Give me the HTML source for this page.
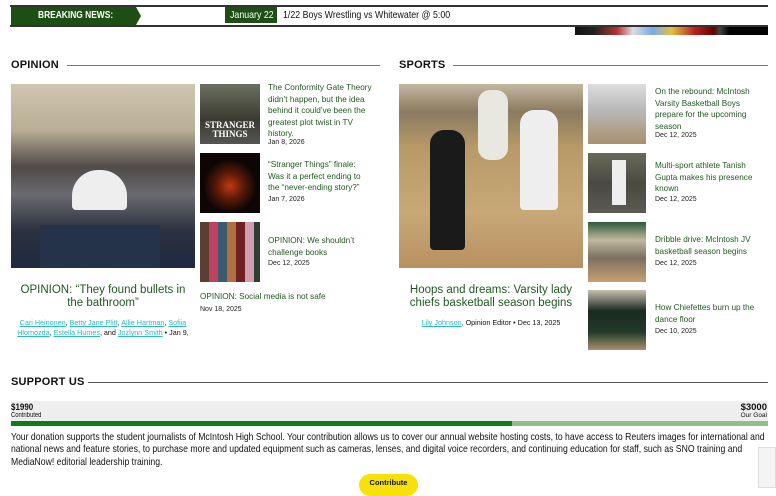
<!DOCTYPE html>
<html><head><meta charset="utf-8"><style>
*{margin:0;padding:0;box-sizing:border-box}
body{width:776px;height:488px;overflow:hidden;background:#fff;font-family:"Liberation Sans",sans-serif;position:relative;color:#111}
.a{position:absolute}
.h{font-weight:bold;font-size:11px;letter-spacing:.2px;color:#111}
.t{font-size:8.2px;line-height:11.6px;color:#1f5a1f}
.d{font-size:7px;color:#222}
.line{height:1px;background:#777}
.n{transform-origin:0 0;transform:scaleX(.84)}
a{color:#28b8c8;text-decoration:underline}
</style></head><body>
<div class="a" style="left:10px;top:5px;width:758px;height:2px;background:#333"></div>
<div class="a" style="left:10px;top:25px;width:758px;height:2px;background:#333"></div>
<div class="a" style="left:11px;top:7px;width:125px;height:18px;background:#1d4f14"></div>
<div class="a" style="left:136px;top:7px;width:0;height:0;border-top:9px solid transparent;border-bottom:9px solid transparent;border-left:5px solid #1d4f14"></div>
<div class="a n" style="left:38px;top:10px;font-size:10px;color:#fff;font-weight:bold">BREAKING NEWS:</div>
<div class="a" style="left:225px;top:7px;width:52px;height:16px;background:#1d4f14"></div>
<div class="a n" style="left:230px;top:9px;font-size:10.5px;color:#fff">January 22</div>
<div class="a n" style="left:283px;top:9px;font-size:10.5px;color:#111">1/22 Boys Wrestling vs Whitewater @ 5:00</div>
<div class="a" style="left:575px;top:27px;width:193px;height:8px;background:linear-gradient(90deg,#111 0%,#222 10%,#b33 22%,#ddd 30%,#7ae 40%,#e4c040 50%,#b22 62%,#600 72%,#444 75%,#000 80%)"></div>

<div class="a h" style="left:11px;top:59px">OPINION</div>
<div class="a line" style="left:67px;top:65px;width:313px"></div>
<div class="a h" style="left:399px;top:59px">SPORTS</div>
<div class="a line" style="left:453px;top:65px;width:315px"></div>

<div class="a" style="left:11px;top:84px;width:184px;height:184px;background:linear-gradient(180deg,#cfc6b0 0%,#b9ae95 25%,#504a48 45%,#6a6a70 60%,#2c3140 80%,#1e2a40 100%)"></div>
<div class="a" style="left:72px;top:170px;width:55px;height:40px;border-radius:26px 26px 4px 4px;background:#eee"></div>
<div class="a" style="left:40px;top:225px;width:120px;height:43px;background:#24324a"></div>
<div class="a" style="left:11px;top:284px;width:184px;text-align:center;font-size:11.5px;line-height:13px;color:#1f5a1f">OPINION: “They found bullets in the bathroom”</div>
<div class="a" style="left:11px;top:318px;width:184px;text-align:center;font-size:7.2px;line-height:10px"><a>Cari Heinonen</a>, <a>Betty Jane Plitt</a>, <a>Allie Hartman</a>, <a>Sofiia Hlomozda</a>, <a>Estella Humes</a>, and <a>Jozlynn Smith</a> • Jan 9,</div>

<div class="a" style="left:200px;top:84px;width:60px;height:60px;background:linear-gradient(180deg,#6a7060,#3c3a30 60%,#555 100%)"></div>
<div class="a" style="left:203px;top:121px;font-size:9px;font-weight:bold;color:#fff;font-family:'Liberation Serif',serif;line-height:9px;text-align:center;width:54px">STRANGER THINGS</div>
<div class="a" style="left:200px;top:153px;width:60px;height:60px;background:radial-gradient(circle at 50% 55%,#c03a10 0%,#5a1a08 30%,#0d0605 60%)"></div>
<div class="a" style="left:200px;top:222px;width:60px;height:60px;background:repeating-linear-gradient(90deg,#5a4030 0 9px,#c04060 9px 18px,#3a5a70 18px 27px,#b07040 27px 36px,#702020 36px 45px,#d0a0b0 45px 54px,#304030 54px 60px)"></div>
<div class="a t" style="left:268px;top:82px;width:106px">The Conformity Gate Theory didn’t happen, but the idea behind it could’ve been the greatest plot twist in TV history.</div>
<div class="a d" style="left:268px;top:139px">Jan 8, 2026</div>
<div class="a t" style="left:268px;top:159px;width:106px">“Stranger Things” finale: Was it a perfect ending to the “never-ending story?”</div>
<div class="a d" style="left:268px;top:196px">Jan 7, 2026</div>
<div class="a t" style="left:268px;top:235px;width:106px">OPINION: We shouldn’t challenge books</div>
<div class="a d" style="left:268px;top:260px">Dec 12, 2025</div>
<div class="a t" style="left:200px;top:291px">OPINION: Social media is not safe</div>
<div class="a d" style="left:200px;top:306px">Nov 18, 2025</div>

<div class="a" style="left:399px;top:84px;width:184px;height:184px;background:linear-gradient(180deg,#c4b8a0 0%,#8a7a60 15%,#b89a68 35%,#c8a878 70%,#b89060 100%)"></div>
<div class="a" style="left:430px;top:130px;width:35px;height:120px;background:#1a1a1a;border-radius:14px 14px 4px 4px"></div>
<div class="a" style="left:520px;top:110px;width:38px;height:100px;background:#eee;border-radius:14px 14px 4px 4px"></div>
<div class="a" style="left:478px;top:90px;width:30px;height:70px;background:#e8e8e0;border-radius:12px"></div>
<div class="a" style="left:399px;top:284px;width:184px;text-align:center;font-size:11.5px;line-height:13px;color:#1f5a1f">Hoops and dreams: Varsity lady chiefs basketball season begins</div>
<div class="a" style="left:399px;top:318px;width:184px;text-align:center;font-size:7.2px;line-height:10px"><a>Lily Johnson</a>, Opinion Editor • Dec 13, 2025</div>

<div class="a" style="left:588px;top:84px;width:58px;height:60px;background:linear-gradient(180deg,#ddd 0%,#bbb 40%,#a89070 100%)"></div>
<div class="a" style="left:588px;top:153px;width:58px;height:60px;background:linear-gradient(180deg,#6a6a5a,#4a4a40 50%,#5a5a50)"></div>
<div class="a" style="left:612px;top:160px;width:14px;height:45px;background:#eee"></div>
<div class="a" style="left:588px;top:222px;width:58px;height:60px;background:linear-gradient(180deg,#2e5a3a 0%,#c0b8a0 30%,#7a7060 60%,#c8a070 100%)"></div>
<div class="a" style="left:588px;top:290px;width:58px;height:60px;background:linear-gradient(180deg,#c8c0b0 0%,#1a2a20 35%,#223a28 70%,#a89070 100%)"></div>
<div class="a t" style="left:655px;top:86px;width:108px">On the rebound: McIntosh Varsity Basketball Boys prepare for the upcoming season</div>
<div class="a d" style="left:655px;top:132px">Dec 12, 2025</div>
<div class="a t" style="left:655px;top:160px;width:108px">Multi-sport athlete Tanish Gupta makes his presence known</div>
<div class="a d" style="left:655px;top:196px">Dec 12, 2025</div>
<div class="a t" style="left:655px;top:234px;width:108px">Dribble drive: McIntosh JV basketball season begins</div>
<div class="a d" style="left:655px;top:260px">Dec 12, 2025</div>
<div class="a t" style="left:655px;top:302px;width:108px">How Chiefettes burn up the dance floor</div>
<div class="a d" style="left:655px;top:328px">Dec 10, 2025</div>

<div class="a h" style="left:11px;top:376px">SUPPORT US</div>
<div class="a line" style="left:88px;top:382px;width:680px;background:#555"></div>
<div class="a" style="left:11px;top:401px;width:757px;height:20px;background:#eee"></div>
<div class="a n" style="left:11px;top:402px;font-size:9.5px;font-weight:bold">$1990</div>
<div class="a n" style="left:11px;top:412px;font-size:7px">Contributed</div>
<div class="a" style="left:700px;top:402px;width:67px;text-align:right;font-size:9.5px;font-weight:bold">$3000</div>
<div class="a" style="left:700px;top:412px;width:67px;text-align:right;font-size:6.5px">Our Goal</div>
<div class="a" style="left:11px;top:421px;width:757px;height:5px;background:#8fc08a"></div>
<div class="a" style="left:11px;top:421px;width:501px;height:5px;background:#0e7c14"></div>
<div class="a n" style="left:11px;top:432px;width:904px;font-size:10.3px;line-height:12.3px;color:#111">Your donation supports the student journalists of McIntosh High School. Your contribution allows us to cover our annual website hosting costs, to have access to Reuters images for international and national news and feature stories, to purchase more and updated equipment such as cameras, lenses, and digital voice recorders, and continuing education for staff, such as SNO training and MediaNow! editorial leadership training.</div>
<div class="a" style="left:359px;top:474px;width:59px;height:22px;border-radius:11px;background:#f6e20a;font-size:7.5px;font-weight:bold;text-align:center;line-height:18px">Contribute</div>
<div class="a" style="left:758px;top:447px;width:18px;height:41px;background:#f4f4f4;border:1px solid #ddd"></div>
</body></html>
